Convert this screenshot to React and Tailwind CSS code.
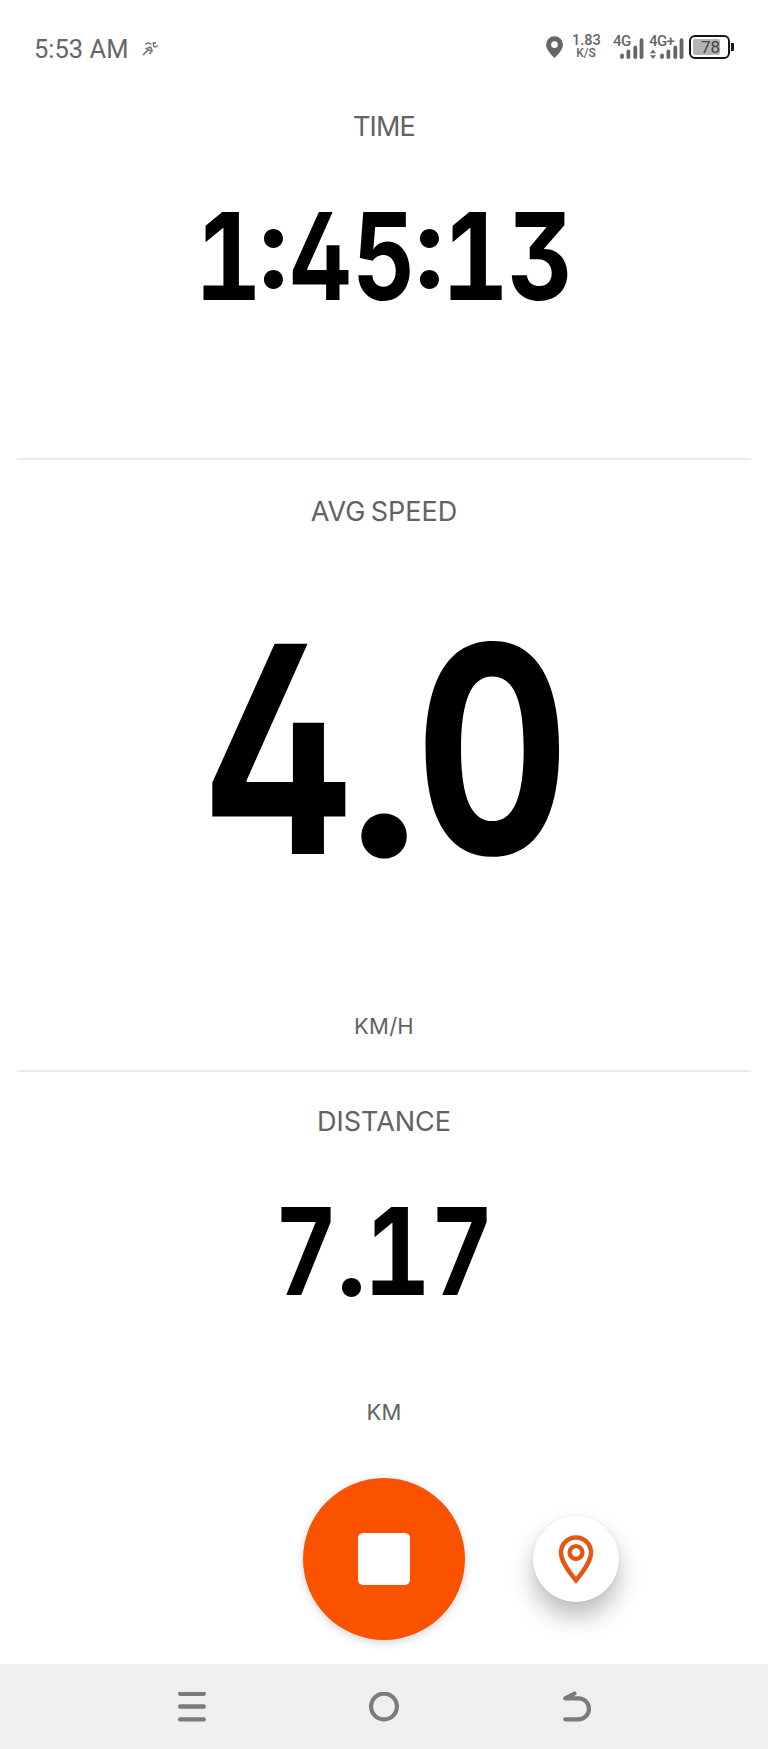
// Per-glyph tweaks that bring the digits to an even, condensed width
const GLYPHS = {
  '.': 'scale-[0.93] origin-[50%_85%] translate-y-[0.008em]',
  ':': 'scale-[0.93] origin-[50%_62%]',
  0: 'scale-x-[0.83]',
  1: 'scale-x-[0.86]',
  3: 'scale-x-[0.83]',
  4: 'scale-x-[0.79] translate-x-[0.012em]',
};

function Readout({ value, className }) {
  return (
    <div
      className={`flex justify-center font-['Inter',sans-serif] font-[720] text-black [font-feature-settings:'tnum','cv02','cv09','case'] ${className}`}
    >
      {value.split('').map((char, i) => {
        const narrow = char === ':' || char === '.';
        return (
          <span key={i} className={`flex shrink-0 justify-center ${narrow ? 'w-[0.215em] font-bold' : 'w-[0.537em]'}`}>
            <span className={`inline-block ${GLYPHS[char] || 'scale-x-[0.8]'}`}>{char}</span>
          </span>
        );
      })}
    </div>
  );
}

function Label({ children, className = '' }) {
  return (
    <div className={`font-['Inter',sans-serif] text-[27px] leading-8 text-[#626262] ${className}`}>{children}</div>
  );
}

function Unit({ children, className }) {
  return (
    <div className={`font-['Inter',sans-serif] text-[22px] leading-7 tracking-[0.01em] text-[#626262] ${className}`}>
      {children}
    </div>
  );
}

function SignalBars({ data }) {
  return (
    <svg className="overflow-visible" width="24" height="21" viewBox="0 0 24 21" fill="none" stroke="#666" strokeWidth="3.8" strokeLinecap="round">
      <path d="M3 17.500v1.500M9.400 13.500v5.500M16.300 9.500v9.500M22.500 2.200v16.800" />
      {data && <path d="M-9 15.200l3-3.700 3 3.700zM-9 17.200l3 3.700 3-3.700z" fill="#666" stroke="none" />}
    </svg>
  );
}

function StatusBar() {
  return (
    <header className="flex h-[94px] items-center justify-between pr-[34px] pl-[34px] font-['Roboto',sans-serif] text-[#666]">
      <div className="flex items-center gap-3.5 pt-[3px]">
        <span className="text-[25.5px] leading-8">5:53 AM</span>
        <svg width="18" height="16" viewBox="0 0 18 16" fill="none" stroke="#777" strokeWidth="1.6">
          <path d="M3.500 3.500q2.500-3 6 0M1 14l5-5 4 1-2.500 3M3.500 8l5-2 1.500 3M11.500 1v3.500q1 3 4.500 0M11 2h3" />
        </svg>
      </div>
      <div className="flex items-center">
        <svg width="17" height="22" viewBox="0 0 18 23" fill="#666">
          <path fillRule="evenodd" d="M9 0a9 9 0 0 1 9 9c0 6-9 14-9 14S0 15 0 9a9 9 0 0 1 9-9Zm0 5.500a3.500 3.500 0 1 0 0 7a3.500 3.500 0 0 0 0-7Z" />
        </svg>
        <div className="mr-px ml-[9px] w-7 text-center text-[14.5px] leading-[13px]">
          <div className="font-medium">1.83</div>
          <div className="text-[12px] font-medium">K/S</div>
        </div>
        <div className="relative ml-[18px] flex h-6 items-end">
          <span className="absolute -top-0.5 -left-1.5 text-[15px] leading-4 font-medium tracking-[-0.04em]">4G</span>
          <SignalBars />
        </div>
        <div className="relative ml-4 flex h-6 items-end">
          <span className="absolute -top-0.5 -left-2.5 text-[15px] leading-4 font-medium tracking-[-0.04em]">4G+</span>
          <SignalBars data />
        </div>
        <div className="ml-1.5 flex items-center">
          <div className="flex h-6 w-[41px] rounded-[6px] border-2 border-[#161616] p-0.5">
            <div className="w-[27px] rounded-[2px] bg-[#b4b4b4] text-right text-[17px] leading-[17px] text-[#444]">78</div>
          </div>
          <div className="ml-px h-2 w-[3px] rounded-r-[1px] bg-[#161616]" />
        </div>
      </div>
    </header>
  );
}

export default function App() {
  return (
    <div className="flex h-[1749px] w-[768px] flex-col bg-white text-center">
      <StatusBar />

      <section className="mx-[17px] h-[366px] border-b-2 border-[#e9e9e9] pt-[17px]">
        <Label className="tracking-[-0.03em]">TIME</Label>
        <Readout value="1:45:13" className="mt-[52px] text-[121px] leading-[122px]" />
      </section>

      <section className="mx-[17px] h-[612px] border-b-2 border-[#e9e9e9] pt-9">
        <Label className="[word-spacing:-0.08em]">AVG SPEED</Label>
        <Readout value="4.0" className="mt-[76px] text-[289px] leading-[290px]" />
        <Unit className="mt-[118px]">KM/H</Unit>
      </section>

      <section className="mx-[17px] pt-[34px]">
        <Label>DISTANCE</Label>
        <Readout value="7.17" className="mt-[52px] text-[121px] leading-[122px]" />
        <Unit className="mt-[86px]">KM</Unit>
      </section>

      {/* Recording controls */}
      <div className="mt-[52px] grid grid-cols-[303px_162px_1fr] items-center">
        <button className="col-start-2 flex size-[162px] items-center justify-center rounded-full bg-[#fb5200] shadow-[0_3px_8px_rgba(0,0,0,0.16)]">
          <span className="size-[52px] rounded-[5px] bg-white" />
        </button>
        <button className="ml-[68px] flex size-[86px] items-center justify-center rounded-full bg-white shadow-[0_15px_24px_rgba(0,0,0,0.26),0_0_4px_rgba(0,0,0,0.08)]">
          <svg width="36" height="50" viewBox="0 0 36 50" fill="none" stroke="#e35614" strokeWidth="4.4">
            <path d="M18 46.500C12 39 3 28 3 18.500a15 15 0 0 1 30 0c0 9.500-9 20.500-15 28Z" />
            <circle cx="18" cy="18.500" r="6.400" />
          </svg>
        </button>
      </div>

      <nav className="mt-auto h-[85px] bg-[#efefef] pt-7">
        <div className="mx-auto grid w-[414px] grid-cols-3 justify-between">
          <svg width="30" height="32" viewBox="0 0 30 32" stroke="#7b7b7b" strokeWidth="4.4" strokeLinecap="round">
            <path d="M3.200 1.700h23.500M3.200 14.500h23.500M3.200 27.400h23.500" />
          </svg>
          <svg className="mx-auto" width="32" height="32" viewBox="0 0 32 32" fill="none" stroke="#7b7b7b" strokeWidth="4.2">
            <circle cx="16" cy="14.500" r="12.900" />
          </svg>
          <svg className="ml-auto overflow-visible" width="32" height="32" viewBox="0 0 32 32" fill="none" stroke="#7b7b7b" strokeWidth="4.200" strokeLinecap="round" strokeLinejoin="round">
            <path d="M15.500 1.500 6.200 6.300h13.300a10.500 10.500 0 0 1 0 21H6.200" />
          </svg>
        </div>
      </nav>
    </div>
  );
}
